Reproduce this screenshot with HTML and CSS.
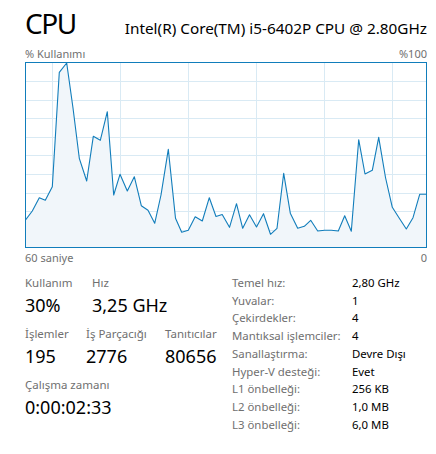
FILE: index.html
```html
<!DOCTYPE html>
<html lang="tr">
  <head>
    <meta charset="UTF-8" />
    <meta name="viewport" content="width=device-width, initial-scale=1.0" />
    <title>CPU</title>
    <link rel="stylesheet" href="styles.css">
  </head>
  <body>
    <div class="page">
      <header class="head">
        <h1 class="title">CPU</h1>
        <span class="model">Intel(R) Core(TM) i5-6402P CPU @ 2.80GHz</span>
      </header>

      <div class="axis">
        <span>% Kullanımı</span>
        <span>%100</span>
      </div>

      <!-- 60 second usage history -->
      <svg class="graph" width="402" height="186" viewBox="0 0 402 186">
        <g class="grid">
          <line x1="27.5" y1="0" x2="27.5" y2="186" />
          <line x1="95.5" y1="0" x2="95.5" y2="186" />
          <line x1="163.5" y1="0" x2="163.5" y2="186" />
          <line x1="231.5" y1="0" x2="231.5" y2="186" />
          <line x1="299.5" y1="0" x2="299.5" y2="186" />
          <line x1="367.5" y1="0" x2="367.5" y2="186" />
          <line x1="0" y1="19.5" x2="402" y2="19.5" />
          <line x1="0" y1="38.5" x2="402" y2="38.5" />
          <line x1="0" y1="56.5" x2="402" y2="56.5" />
          <line x1="0" y1="75.5" x2="402" y2="75.5" />
          <line x1="0" y1="93.5" x2="402" y2="93.5" />
          <line x1="0" y1="112.5" x2="402" y2="112.5" />
          <line x1="0" y1="131.5" x2="402" y2="131.5" />
          <line x1="0" y1="149.5" x2="402" y2="149.5" />
          <line x1="0" y1="168.5" x2="402" y2="168.5" />
        </g>
        <polygon class="area" points="0,185 0,158.7 7.3,149 14.3,135.7 20.3,138.3 27.3,124.7 34.3,10.3 41.7,1 48,46 54.3,96.3 61.7,119 68.3,74.3 75.3,78.3 82.3,49.7 88.7,133 95,112.3 102.3,129 109.3,114.7 116.3,143.7 123,148.3 129.7,161.3 136,133 143.3,87.3 150.5,156.3 156.7,170.3 163.3,168.3 170.2,154.7 177.3,159 184.3,135.7 191,154.5 197.2,152.5 204.5,165.3 211.5,141.7 217.7,166.3 224.5,152.7 231.5,165 238.5,151.7 245.5,172.3 252,166.3 258.7,111.3 265.3,151.2 272.7,166.3 279.3,164.3 285.7,158.3 292.7,169 299.7,168.3 306.3,168.3 313.3,169 319.7,153.7 326.3,169.3 333.7,77.7 340,112 347.3,108.3 353.7,75.3 360.5,115.5 367.3,145.3 374.3,156.3 381.3,167 388,155.7 394.7,132.3 401,132.3 401,185" />
        <polyline class="line" points="0,158.7 7.3,149 14.3,135.7 20.3,138.3 27.3,124.7 34.3,10.3 41.7,1 48,46 54.3,96.3 61.7,119 68.3,74.3 75.3,78.3 82.3,49.7 88.7,133 95,112.3 102.3,129 109.3,114.7 116.3,143.7 123,148.3 129.7,161.3 136,133 143.3,87.3 150.5,156.3 156.7,170.3 163.3,168.3 170.2,154.7 177.3,159 184.3,135.7 191,154.5 197.2,152.5 204.5,165.3 211.5,141.7 217.7,166.3 224.5,152.7 231.5,165 238.5,151.7 245.5,172.3 252,166.3 258.7,111.3 265.3,151.2 272.7,166.3 279.3,164.3 285.7,158.3 292.7,169 299.7,168.3 306.3,168.3 313.3,169 319.7,153.7 326.3,169.3 333.7,77.7 340,112 347.3,108.3 353.7,75.3 360.5,115.5 367.3,145.3 374.3,156.3 381.3,167 388,155.7 394.7,132.3 401,132.3" />
        <rect class="frame" x="0.5" y="0.5" width="401" height="185" />
      </svg>

      <div class="axis axis-bottom">
        <span>60 saniye</span>
        <span>0</span>
      </div>

      <section class="details">
        <div class="stats">
          <div class="stat-row">
            <div class="stat stat-usage">
              <div class="label">Kullanım</div>
              <div class="value">30%</div>
            </div>
            <div class="stat">
              <div class="label">Hız</div>
              <div class="value">3,25 GHz</div>
            </div>
          </div>
          <div class="stat-row">
            <div class="stat stat-proc">
              <div class="label">İşlemler</div>
              <div class="value">195</div>
            </div>
            <div class="stat stat-threads">
              <div class="label">İş Parçacığı</div>
              <div class="value">2776</div>
            </div>
            <div class="stat">
              <div class="label">Tanıtıcılar</div>
              <div class="value">80656</div>
            </div>
          </div>
          <div class="stat-row">
            <div class="stat">
              <div class="label">Çalışma zamanı</div>
              <div class="value">0:00:02:33</div>
            </div>
          </div>
        </div>

        <table class="specs">
          <tr><td>Temel hız:</td><td>2,80 GHz</td></tr>
          <tr><td>Yuvalar:</td><td>1</td></tr>
          <tr><td>Çekirdekler:</td><td>4</td></tr>
          <tr><td>Mantıksal işlemciler:</td><td>4</td></tr>
          <tr><td>Sanallaştırma:</td><td>Devre Dışı</td></tr>
          <tr><td>Hyper-V desteği:</td><td>Evet</td></tr>
          <tr><td>L1 önbelleği:</td><td>256 KB</td></tr>
          <tr><td>L2 önbelleği:</td><td>1,0 MB</td></tr>
          <tr><td>L3 önbelleği:</td><td>6,0 MB</td></tr>
        </table>
      </section>
    </div>
  </body>
</html>
```

FILE: styles.css
```css
body {
  font-family: "Noto Sans", "Open Sans", sans-serif;
  background-color: #fff;
  color: #000;
  margin: 0;
}

.page {
  width: 402px;
  padding: 0 9px 0 25px;
}

.head {
  display: flex;
  justify-content: space-between;
  align-items: baseline;
  height: 46px;
  padding-top: 4px;
  box-sizing: border-box;
}

.title {
  margin: 0;
  font-size: 28px;
  font-weight: normal;
  letter-spacing: -1.5px;
  line-height: 38px;
}

.model {
  font-size: 15.3px;
}

.axis {
  display: flex;
  justify-content: space-between;
  font-size: 11px;
  line-height: 16px;
  color: #707070;
}

.axis-bottom {
  padding-top: 2px;
}

.graph {
  display: block;
}

.grid line {
  stroke: #d9eaf4;
  stroke-width: 1;
}

.area {
  fill: #f1f6fa;
}

.line {
  fill: none;
  stroke: #117dbb;
  stroke-width: 1.1;
  stroke-linejoin: round;
}

.frame {
  fill: none;
  stroke: #117dbb;
  stroke-width: 1;
}

.details {
  display: flex;
  margin-top: 8px;
}

.stats {
  width: 207px;
}

.stat-row {
  display: flex;
  margin-bottom: 7px;
}

.stat-usage {
  width: 67px;
}

.stat-proc {
  width: 61px;
}

.stat-threads {
  width: 79px;
}

.label {
  font-size: 11.5px;
  line-height: 18px;
  color: #707070;
}

.value {
  font-size: 18px;
  line-height: 26px;
}

.specs {
  border-collapse: collapse;
  font-size: 11.4px;
}

.specs td {
  padding: 0;
  line-height: 17.7px;
  white-space: nowrap;
}

.specs td:first-child {
  width: 120px;
  color: #707070;
}
```
